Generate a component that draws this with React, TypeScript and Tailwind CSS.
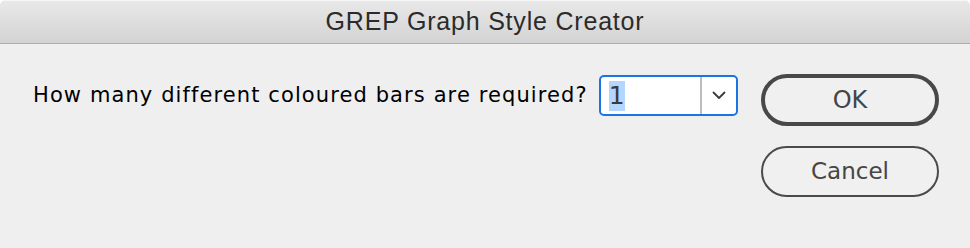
import { useState } from "react";

const sys = { fontFamily: '"DejaVu Sans", "Liberation Sans", sans-serif' };

const Chevron = () => (
  <svg width="14" height="9" viewBox="0 0 14 9" fill="none">
    <path d="M1.5 1.5 L7 7 L12.5 1.5" stroke="#3a3a3a" strokeWidth="1.8" strokeLinecap="round" strokeLinejoin="round" />
  </svg>
);

export default function App() {
  const [count] = useState("1");

  return (
    <div className="w-[970px] h-[248px] bg-white">
      <div className="h-full flex flex-col rounded-t-[6px] overflow-hidden bg-[#efefef]">
        <div className="h-[44px] shrink-0 flex items-center justify-center bg-gradient-to-b from-[#e9e9e9] to-[#d3d3d3] border-b border-[#adadad] shadow-[inset_0_1px_0_#f6f6f6]">
          <span className="text-[25px] text-[#2b2b2b] tracking-[0.8px] font-['Liberation_Sans',sans-serif]">
            GREP Graph Style Creator
          </span>
        </div>

        <div className="flex pl-[33px] pr-[31px] pt-[30px]" style={sys}>
          <div className="flex items-center gap-[11px] h-[41px] mt-[1px]">
            <span className="text-[21px] tracking-[1.1px] text-black leading-none">
              How many different coloured bars are required?
            </span>
            <div className="w-[139px] h-[41px] flex border-2 border-[#1b74e4] rounded-[5px] bg-white">
              <div className="flex-1 flex items-center pl-[8px]">
                <span className="text-[25px] leading-[30px] text-[#3a3a3a] bg-[#b4d5fe]">{count}</span>
              </div>
              <div className="w-[2px] bg-[#bdbdbd]" />
              <div className="w-[34px] flex items-center justify-center">
                <Chevron />
              </div>
            </div>
          </div>

          <div className="ml-auto flex flex-col gap-[20px]">
            <button className="w-[178px] h-[52px] rounded-full border-[4px] border-[#484848] bg-[#f0f0f0] text-[24px] text-[#454545] flex items-center justify-center">
              OK
            </button>
            <button className="w-[178px] h-[51px] rounded-full border-2 border-[#4a4a4a] bg-[#f0f0f0] text-[23px] text-[#454545] flex items-center justify-center">
              Cancel
            </button>
          </div>
        </div>
      </div>
    </div>
  );
}
